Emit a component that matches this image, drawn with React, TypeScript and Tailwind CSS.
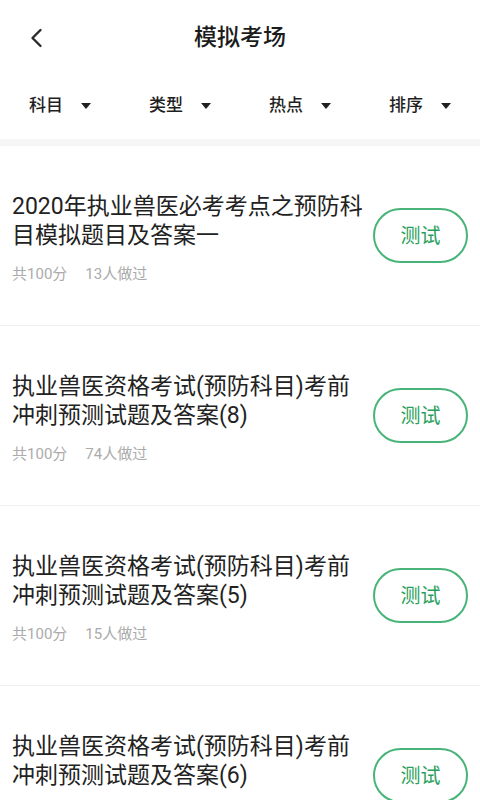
import React from 'react';

interface Paper {
  title: string;
  score: number;
  takers: number;
}

const papers: Paper[] = [
  { title: '2020年执业兽医必考考点之预防科目模拟题目及答案一', score: 100, takers: 13 },
  { title: '执业兽医资格考试(预防科目)考前冲刺预测试题及答案(8)', score: 100, takers: 74 },
  { title: '执业兽医资格考试(预防科目)考前冲刺预测试题及答案(5)', score: 100, takers: 15 },
  { title: '执业兽医资格考试(预防科目)考前冲刺预测试题及答案(6)', score: 100, takers: 22 },
];

const filters = ['科目', '类型', '热点', '排序'];

function Caret() {
  return (
    <svg width="10" height="6" viewBox="0 0 10 6">
      <path d="M0 0 H10 L5 6 Z" fill="#1f1f1f" />
    </svg>
  );
}

function PaperRow({ paper }: { paper: Paper }) {
  return (
    <div className="h-[180px] flex items-center px-3 pt-[4px] border-b border-[#efefef]">
      <div className="w-[354px] shrink-0">
        <div className="text-[23px] leading-[29px] text-[#222]">{paper.title}</div>
        <div className="mt-[14px] flex gap-[18px] text-[15px] leading-[20px] text-[#ababab]">
          <span>共{paper.score}分</span>
          <span>{paper.takers}人做过</span>
        </div>
      </div>
      <button className="ml-auto -mt-[4px] w-[95px] h-[55px] shrink-0 rounded-full border-2 border-[#48b478] text-[20px] text-[#2a9f5b] flex items-center justify-center">
        测试
      </button>
    </div>
  );
}

export default function App() {
  return (
    <div className="w-[480px] h-[800px] overflow-hidden bg-white font-[Roboto,'Noto_Sans_CJK_SC',sans-serif]">
      {/* Header */}
      <div className="h-[76px] grid grid-cols-[1fr_auto_1fr] items-center">
        <div className="pl-[29px] flex items-center">
          <svg width="14" height="20" viewBox="0 0 14 20">
            <path d="M11.5 2 L3.5 10 L11.5 18" fill="none" stroke="#2a2a2a" strokeWidth="2.4" strokeLinecap="round" strokeLinejoin="round" />
          </svg>
        </div>
        <div className="text-[23px] font-medium text-[#1c1c1c]">模拟考场</div>
        <div />
      </div>

      {/* Filters */}
      <div className="h-[63px] pb-[3px] grid grid-cols-4">
        {filters.map((f) => (
          <div key={f} className="flex items-center justify-center gap-[18px]">
            <span className="text-[17px] font-medium text-[#1f1f1f]">{f}</span>
            <Caret />
          </div>
        ))}
      </div>

      <div className="h-[7px] bg-[#f6f6f6]" />

      {/* List */}
      <div>
        {papers.map((p, i) => (
          <PaperRow key={i} paper={p} />
        ))}
      </div>
    </div>
  );
}
